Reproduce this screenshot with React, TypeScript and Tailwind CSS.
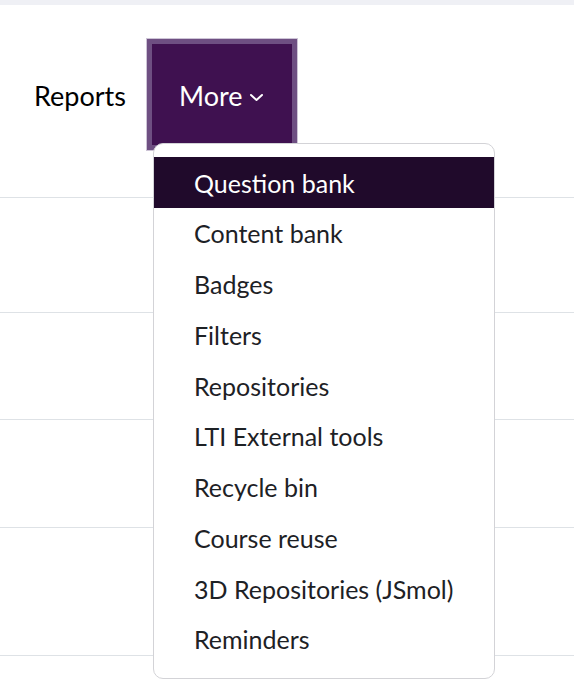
import React from 'react';

const items = [
  'Question bank',
  'Content bank',
  'Badges',
  'Filters',
  'Repositories',
  'LTI External tools',
  'Recycle bin',
  'Course reuse',
  '3D Repositories (JSmol)',
  'Reminders',
];

const rows = [115, 107, 108, 128];

export default function App() {
  return (
    <div className="relative h-[680px] w-full overflow-hidden bg-white font-['Lato','Noto_Sans',sans-serif] text-[#1d2125]">
      <div className="h-[5px] bg-[#eff0f5]" />

      {/* secondary navigation */}
      <div className="flex h-[193px] items-start border-b border-[#dee2e6] pt-[34px]">
        <div className="flex h-[111px] w-[147px] items-center pl-[34px] pt-[3px] text-[27px] text-black">
          Reports
        </div>
        <div className="relative">
          <button className="flex h-[111px] w-[150px] items-center border-[5px] border-[#6e4f82] bg-[#3f1150] pl-[27px] pt-[3px] text-[27px] text-white outline outline-1 outline-[#cdc4d6]">
            <span>More</span>
            <svg
              className="ml-[6px] mt-[2px]"
              width="15"
              height="9"
              viewBox="0 0 15 9"
              fill="none"
              stroke="currentColor"
              strokeWidth="2"
              strokeLinecap="round"
              strokeLinejoin="round"
            >
              <path d="M2 2l5.5 5 5.5-5" />
            </svg>
          </button>

          {/* dropdown menu */}
          <div className="absolute left-[6px] top-[104px] z-10 w-[342px] rounded-[10px] border border-[#d3d3d7] bg-white py-[13px]">
            {items.map((item, i) => (
              <div
                key={item}
                className={`flex h-[50.75px] items-center pl-[40px] pt-[2px] text-[25px] ${
                  i === 0 ? 'bg-[#200a2b] text-white' : 'text-[#1d2125]'
                }`}
              >
                {item}
              </div>
            ))}
          </div>
        </div>
      </div>

      {/* table rows behind the menu */}
      {rows.map((h, i) => (
        <div key={i} style={{ height: h }} className="border-b border-[#dee2e6]" />
      ))}
    </div>
  );
}
